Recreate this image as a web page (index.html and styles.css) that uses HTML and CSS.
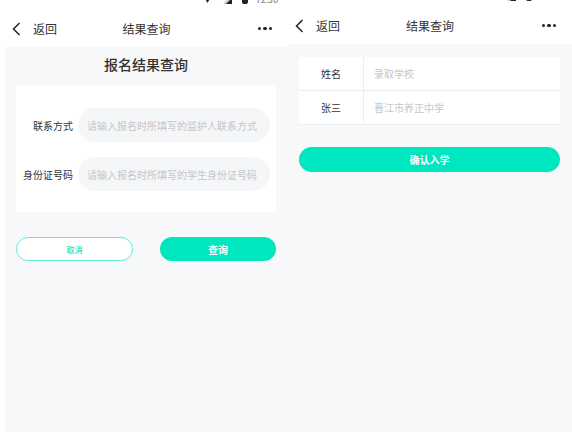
FILE: index.html
```html
<!DOCTYPE html>
<html lang="zh">
<head>
<meta charset="utf-8">
<link rel="stylesheet" href="styles.css">
</head>
<body>
<div class="screens">
  <section class="phone phone-left">
    <div class="status">
      <svg class="st-wifi" width="9" height="9" viewBox="0 0 9 9"><path d="M0 0 H9 L4.5 8 Z" fill="#222"/></svg>
      <svg class="st-sig" width="9" height="9" viewBox="0 0 9 9"><path d="M9 0 V9 H0 Z" fill="#ccc"/><path d="M9 3 V9 H3 Z" fill="#222"/></svg>
      <svg class="st-bat" width="6" height="9" viewBox="0 0 6 9"><rect x="0" y="0" width="6" height="9" rx="2" fill="#222"/></svg>
      <span class="st-time">12:30</span>
    </div>
    <header class="nav">
      <div class="nav-back">
        <svg width="9" height="14" viewBox="0 0 9 14"><path d="M7.5 1 L1.5 7 L7.5 13" fill="none" stroke="#222" stroke-width="1.5"/></svg>
        <span>返回</span>
      </div>
      <div class="nav-title">结果查询</div>
      <div class="nav-more"><i></i><i></i><i></i></div>
    </header>
    <main class="content">
      <h1 class="page-title">报名结果查询</h1>
      <div class="form-card">
        <div class="form-row">
          <label class="form-label">联系方式</label>
          <div class="form-input">请输入报名时所填写的监护人联系方式</div>
        </div>
        <div class="form-row">
          <label class="form-label">身份证号码</label>
          <div class="form-input">请输入报名时所填写的学生身份证号码</div>
        </div>
      </div>
      <div class="btn-row">
        <button class="btn btn-outline">取消</button>
        <button class="btn btn-fill">查询</button>
      </div>
    </main>
  </section>

  <section class="phone phone-right">
    <div class="status">
      <svg class="st-wifi" width="9" height="9" viewBox="0 0 9 9"><path d="M0 0 H9 L4.5 8 Z" fill="#222"/></svg>
      <svg class="st-sig" width="9" height="9" viewBox="0 0 9 9"><path d="M9 0 V9 H0 Z" fill="#ccc"/><path d="M9 3 V9 H3 Z" fill="#222"/></svg>
      <svg class="st-bat" width="6" height="9" viewBox="0 0 6 9"><rect x="0" y="0" width="6" height="9" rx="2" fill="#222"/></svg>
      <span class="st-time">12:30</span>
    </div>
    <header class="nav">
      <div class="nav-back">
        <svg width="9" height="14" viewBox="0 0 9 14"><path d="M7.5 1 L1.5 7 L7.5 13" fill="none" stroke="#222" stroke-width="1.5"/></svg>
        <span>返回</span>
      </div>
      <div class="nav-title">结果查询</div>
      <div class="nav-more"><i></i><i></i><i></i></div>
    </header>
    <main class="content content-right">
      <div class="result-table">
        <div class="result-row">
          <div class="result-key">姓名</div>
          <div class="result-val">录取学校</div>
        </div>
        <div class="result-row">
          <div class="result-key">张三</div>
          <div class="result-val">晋江市养正中学</div>
        </div>
      </div>
      <button class="btn btn-fill btn-block">确认入学</button>
    </main>
  </section>
</div>
</body>
</html>
```

FILE: styles.css
```css
* { box-sizing: border-box; margin: 0; padding: 0; }
html, body { width: 572px; height: 432px; overflow: hidden; background: #fff; }
body {
  font-family: "Noto Sans CJK SC", "Noto Sans", sans-serif;
  color: #333;
}
.screens {
  display: flex;
  height: 432px;
  padding-left: 5px;
}
.phone {
  display: flex;
  flex-direction: column;
  height: 440px;
}
.phone-left { width: 283px; }
.phone-right { width: 284px; margin-top: -3px; }

.status {
  height: 15px;
  margin-top: -5px;
  display: flex;
  align-items: flex-start;
  justify-content: flex-end;
  padding-right: 10px;
  background: #fff;
}
.st-wifi { margin-right: 11px; }
.st-sig { margin-right: 10px; }
.st-bat { margin-right: 8px; }
.st-time { font-family: "Roboto", sans-serif; font-size: 9px; line-height: 10px; color: #777; }

.nav {
  height: 37px;
  display: flex;
  align-items: center;
  justify-content: space-between;
  padding: 0 16px 0 7px;
  position: relative;
  background: #fff;
}
.nav-back { display: flex; align-items: center; font-size: 12px; }
.nav-back svg { margin-right: 12px; }
.nav-title {
  position: absolute;
  left: 0; right: 0;
  text-align: center;
  font-size: 12px;
  pointer-events: none;
}
.nav-more { display: flex; gap: 2px; }
.nav-more i { width: 3.5px; height: 3.5px; border-radius: 50%; background: #222; display: block; }

.content {
  flex: 1;
  background: #f7f8fa;
  padding: 0 12px 0 11px;
}
.page-title {
  font-size: 14px;
  font-weight: 500;
  text-align: center;
  line-height: 20px;
  margin-top: 7px;
  color: #333;
}
.form-card {
  margin-top: 12px;
  background: #fff;
  padding: 22px 6px 21px 7px;
  display: flex;
  flex-direction: column;
  gap: 15px;
}
.form-row { display: flex; align-items: center; }
.form-label {
  width: 50px;
  text-align: right;
  font-size: 10px;
  color: #333;
  margin-right: 5px;
  white-space: nowrap;
}
.form-input {
  flex: 1;
  height: 34px;
  border-radius: 17px;
  background: #f5f6f7;
  font-size: 10px;
  color: #c4c6ca;
  padding-left: 9px;
  display: flex;
  align-items: center;
  white-space: nowrap;
}
.btn-row {
  display: flex;
  justify-content: space-between;
  margin-top: 25px;
}
.btn {
  height: 24px;
  border-radius: 12px;
  font-family: inherit;
  border: none;
  display: flex;
  align-items: center;
  justify-content: center;
}
.btn-outline {
  width: 117px;
  background: #fff;
  border: 1px solid #63ead4;
  color: #2fdcbc;
  font-size: 8px;
  font-weight: 500;
}
.btn-fill {
  width: 116px;
  background: #00e6be;
  color: #fff;
  font-size: 10px;
  font-weight: 700;
}

.content-right { padding-top: 13px; }
.result-table { background: #fff; }
.result-row {
  display: flex;
  height: 34px;
  border-bottom: 1px solid #ebedf0;
}
.result-key {
  width: 65px;
  border-right: 1px solid #ebedf0;
  display: flex;
  align-items: center;
  justify-content: center;
  font-size: 10px;
  color: #333;
}
.result-val {
  flex: 1;
  display: flex;
  align-items: center;
  padding-left: 10px;
  font-size: 10px;
  color: #c4c6ca;
}
.btn-block {
  width: 100%;
  height: 25px;
  border-radius: 13px;
  margin-top: 22px;
}
```
